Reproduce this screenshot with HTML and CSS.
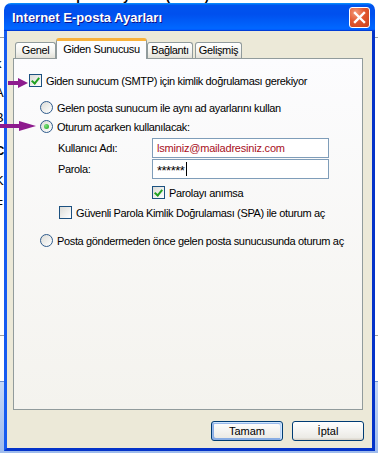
FILE: index.html
```html
<!DOCTYPE html>
<html lang="tr">
<head>
    <meta charset="UTF-8">
    <meta name="viewport" content="width=device-width, initial-scale=1.0">
    <title>Internet E-posta Ayarları</title>
    <link rel="stylesheet" href="styles.css">
</head>
<body>
    <!-- Outlook window behind the dialog, only its edges show -->
    <div class="desktop">
        <div class="behind-title">Internet E-posta Ayarları (POP3)</div>
        <div class="behind-rule"></div>
        <div class="behind-letters">
            <span class="gap-a">k</span>
            <span class="gap-b">A</span>
            <span class="gap-c">B</span>
            <span class="gap-d bold">C</span>
            <span class="gap-e">K</span>
            <span class="gap-f">F</span>
        </div>
        <div class="behind-rule low"></div>
        <div class="behind-band"></div>
    </div>

    <div class="window">
        <div class="titlebar">
            <span class="title">Internet E-posta Ayarları</span>
            <button class="close" aria-label="Kapat">
                <svg width="13" height="13" viewBox="0 0 13 13">
                    <path d="M2 2 L11 11 M11 2 L2 11" stroke="#fff" stroke-width="2.4" stroke-linecap="square"/>
                </svg>
            </button>
        </div>

        <div class="frame">
            <div class="tabs">
                <div class="tab tab-genel">Genel</div>
                <div class="tab tab-active">Giden Sunucusu</div>
                <div class="tab tab-baglanti">Bağlantı</div>
                <div class="tab tab-gelismis">Gelişmiş</div>
            </div>

            <div class="panel">
                <label class="row row-auth">
                    <span class="checkbox checked"></span>
                    Giden sunucum (SMTP) için kimlik doğrulaması gerekiyor
                </label>

                <label class="row row-radio1 indent-radio">
                    <span class="radio"></span>
                    Gelen posta sunucum ile aynı ad ayarlarını kullan
                </label>

                <label class="row row-radio2 indent-radio">
                    <span class="radio selected"></span>
                    Oturum açarken kullanılacak:
                </label>

                <div class="field field-user">
                    <span class="field-label">Kullanıcı Adı:</span>
                    <div class="textbox user-value">lsminiz@mailadresiniz.com</div>
                </div>

                <div class="field field-pass">
                    <span class="field-label">Parola:</span>
                    <div class="textbox pass-value">******<span class="caret"></span></div>
                </div>

                <label class="row row-remember">
                    <span class="checkbox checked"></span>
                    Parolayı anımsa
                </label>

                <label class="row row-spa">
                    <span class="checkbox"></span>
                    Güvenli Parola Kimlik Doğrulaması (SPA) ile oturum aç
                </label>

                <label class="row row-radio3 indent-radio">
                    <span class="radio"></span>
                    Posta göndermeden önce gelen posta sunucusunda oturum aç
                </label>
            </div>

            <div class="buttons">
                <button class="btn btn-default">Tamam</button>
                <button class="btn">İptal</button>
            </div>
        </div>
    </div>

    <!-- annotation arrows drawn over the dialog -->
    <svg class="arrow arrow-one" width="24" height="14" viewBox="0 0 24 14">
        <rect x="2" y="5" width="12" height="4" fill="#8e1b8e"/>
        <polygon points="12,2 22,7 12,12" fill="#8e1b8e"/>
    </svg>
    <svg class="arrow arrow-two" width="38" height="12" viewBox="0 0 38 12">
        <rect x="0" y="4" width="22" height="4" fill="#8e1b8e"/>
        <polygon points="19,1 36,6 19,11" fill="#8e1b8e"/>
    </svg>
</body>
</html>
```

FILE: styles.css
```css
/* Page and the window behind the dialog */
body {
    margin: 0;
    padding: 0;
    width: 378px;
    height: 453px;
    overflow: hidden;
    position: relative;
    background-color: #ffffff;
    font-family: Tahoma, "Liberation Sans", sans-serif;
    font-size: 11px;
    letter-spacing: -0.35px;
    color: #000000;
}

.desktop {
    height: 453px;
    display: flex;
    flex-direction: column;
    letter-spacing: 0;
}

.behind-title {
    margin-top: -11px;
    margin-left: 12px;
    font-weight: bold;
    font-size: 13px;
    line-height: 13px;
}

.behind-rule {
    margin-top: 35px;
    height: 1px;
    background-color: #a0a0a0;
}

.behind-rule.low {
    margin-top: 126px;
}

.behind-letters {
    display: flex;
    flex-direction: column;
    margin-left: -5px;
    font-size: 13px;
    line-height: 9px;
}

.behind-letters .bold {
    font-weight: bold;
}

.gap-a { margin-top: 21px; }
.gap-b { margin-top: 20px; }
.gap-c { margin-top: 16px; }
.gap-d { margin-top: 24px; }
.gap-e { margin-top: 21px; }
.gap-f { margin-top: 15px; }

.behind-band {
    margin-top: 45px;
    flex: 1;
    border-top: 1px solid #6d8fd0;
    background: linear-gradient(180deg, #c5d8f7, #9ebbec);
}

/* Dialog window */
.window {
    position: absolute;
    left: 4px;
    top: 3px;
    width: 371px;
}

.titlebar {
    height: 28px;
    box-sizing: border-box;
    padding: 0 5px 0 8px;
    border-radius: 7px 7px 0 0;
    display: flex;
    align-items: center;
    justify-content: space-between;
    background: linear-gradient(180deg, #0997ff, #0053ee 8%, #0050ee 40%, #0066ff 88%, #0066ff 93%, #005bff 95%, #003dd7 96%, #003dd7);
}

.title {
    color: #ffffff;
    font-family: "Liberation Sans", sans-serif;
    font-weight: bold;
    font-size: 13px;
    letter-spacing: 0;
    text-shadow: 1px 1px #0f1089;
    padding-top: 1px;
}

.close {
    width: 21px;
    height: 21px;
    padding: 0;
    border: 1px solid #ffffff;
    border-radius: 3px;
    display: flex;
    align-items: center;
    justify-content: center;
    background: radial-gradient(circle at 30% 25%, #f49a7a 0%, #e2582f 45%, #c9411c 100%);
}

.frame {
    background-color: #ece9d8;
    border-left: 3px solid #165bf0;
    border-right: 3px solid #0433c9;
    border-bottom: 3px solid #0433c9;
    padding: 7px 8px 7px 6px;
}

/* Tabs */
.tabs {
    display: flex;
    align-items: flex-end;
    padding-left: 2px;
    margin-bottom: -1px;
    position: relative;
    z-index: 1;
}

.tab {
    height: 16px;
    box-sizing: border-box;
    margin-bottom: 1px;
    border: 1px solid #919b9c;
    border-bottom: none;
    border-radius: 3px 3px 0 0;
    background: linear-gradient(180deg, #ffffff, #f3f3ef 60%, #e3e1d8);
    line-height: 15px;
    text-align: center;
}

.tab-genel {
    width: 41px;
}

.tab-active {
    width: 91px;
    height: 21px;
    margin-bottom: 0;
    border-top: 3px solid #f8b23c;
    border-radius: 3px 3px 0 0;
    background: #fcfcfe;
    line-height: 16px;
}

.tab-baglanti {
    width: 46px;
}

.tab-gelismis {
    width: 47px;
    margin-left: 2px;
}

/* Tab page */
.panel {
    height: 352px;
    box-sizing: border-box;
    margin-right: 1px;
    border: 1px solid #919b9c;
    background: linear-gradient(180deg, #fcfcfe, #f4f3ee);
    padding: 15px 0 0 15px;
    display: flex;
    flex-direction: column;
}

.row {
    display: flex;
    align-items: center;
    gap: 4px;
    height: 13px;
    white-space: nowrap;
}

.indent-radio {
    margin-left: 11px;
}

.row-radio1 { margin-top: 14px; }
.row-radio2 { margin-top: 6px; }
.row-remember { margin-top: 7px; margin-left: 123px; }
.row-spa { margin-top: 7px; margin-left: 30px; }
.row-radio3 { margin-top: 15px; }

.checkbox {
    width: 13px;
    height: 13px;
    box-sizing: border-box;
    flex: none;
    border: 1px solid #1c5180;
    background: linear-gradient(135deg, #dcdcd7, #ffffff);
    position: relative;
}

.checkbox.checked::after {
    content: "";
    position: absolute;
    left: 3px;
    top: 1px;
    width: 3px;
    height: 6px;
    border-right: 2px solid #21a121;
    border-bottom: 2px solid #21a121;
    transform: rotate(40deg);
}

.radio {
    width: 13px;
    height: 13px;
    box-sizing: border-box;
    flex: none;
    border: 1px solid #2f5b8c;
    border-radius: 50%;
    background: linear-gradient(135deg, #dcdcd7, #ffffff);
    position: relative;
}

.radio.selected::after {
    content: "";
    position: absolute;
    left: 3px;
    top: 3px;
    width: 5px;
    height: 5px;
    border-radius: 50%;
    background: radial-gradient(circle at 35% 35%, #7be37b, #21a121);
}

/* Name and password fields */
.field {
    display: flex;
    align-items: center;
    margin-left: 29px;
}

.field-user { margin-top: 5px; }
.field-pass { margin-top: 1px; }

.field-label {
    width: 94px;
}

.textbox {
    width: 177px;
    height: 20px;
    box-sizing: border-box;
    border: 1px solid #7f9db9;
    background-color: #ffffff;
    padding: 0 4px;
    line-height: 18px;
    display: flex;
    align-items: center;
}

.user-value {
    color: #a8101c;
    letter-spacing: -0.2px;
}

.pass-value {
    font-size: 13px;
    letter-spacing: -0.5px;
    padding-top: 4px;
}

.caret {
    width: 1px;
    height: 14px;
    margin-left: 2px;
    margin-top: -4px;
    background-color: #000000;
}

/* OK / Cancel */
.buttons {
    display: flex;
    justify-content: flex-end;
    gap: 9px;
    margin-top: 11px;
}

.btn {
    width: 72px;
    height: 20px;
    padding: 0;
    border: 1px solid #003c74;
    border-radius: 3px;
    background: linear-gradient(180deg, #ffffff, #ecebe6 86%, #d6d0c5);
    font-family: Tahoma, "Liberation Sans", sans-serif;
    font-size: 11px;
    color: #000000;
}

.btn-default {
    box-shadow: inset -1px 1px #cee7ff, inset 1px 2px #98b8ea, inset -2px 2px #bcd4f6, inset 1px -1px #89ade4, inset 2px -2px #89ade4;
}

/* Annotation arrows */
.arrow {
    position: absolute;
}

.arrow-one {
    left: 6px;
    top: 76px;
}

.arrow-two {
    left: 0;
    top: 120px;
}
```
